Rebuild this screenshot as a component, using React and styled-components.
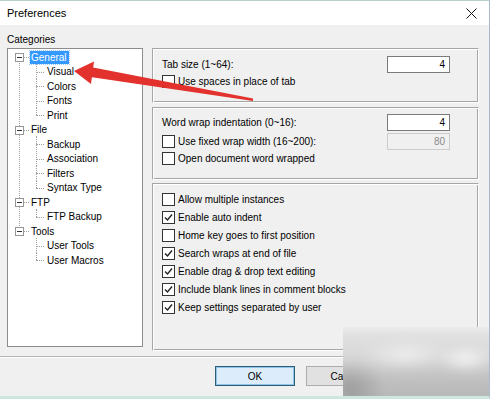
import React from "react";
import styled, { createGlobalStyle } from "styled-components";

const GlobalStyle = createGlobalStyle`
  html, body {
    margin: 0;
    padding: 0;
    background: #ffffff;
  }
  body {
    font-family: "Liberation Sans", Arial, sans-serif;
    font-size: 10px;
    color: #000;
  }
`;

const Window = styled.div`
  position: relative;
  width: 490px;
  height: 399px;
  box-sizing: border-box;
  background: #f0f0f0;
  border-top: 1px solid #b7cfc8;
  border-right: 1px solid #a9bccf;
  border-bottom: 3px solid #cde6e0;
  display: flex;
  flex-direction: column;
  overflow: hidden;
`;

const TitleBar = styled.div`
  height: 24px;
  flex: none;
  background: #ffffff;
  display: flex;
  align-items: center;
  justify-content: space-between;
  padding: 0 12px 0 7px;
  font-size: 11px;
`;

const Close = styled.div`
  width: 12px;
  height: 12px;
  display: flex;
  align-items: center;
  justify-content: center;
`;

const Main = styled.div`
  display: grid;
  grid-template-columns: 136px 1fr;
  grid-template-rows: 19px auto;
  column-gap: 9px;
  padding: 4px 10px 0 7px;
`;

const Label = styled.div`
  grid-column: 1 / 3;
  align-self: center;
  padding-top: 1px;
`;

const Tree = styled.div`
  position: relative;
  height: 299px;
  box-sizing: border-box;
  background: #ffffff;
  border: 1px solid #8c8c8c;
  padding-top: 1px;

  &::before {
    content: "";
    position: absolute;
    left: 11px;
    top: 9px;
    height: 174px;
    border-left: 1px dotted #a0a0a0;
  }
`;

const Row = styled.div`
  position: relative;
  height: 14.5px;
  display: flex;
  align-items: center;
  padding-left: ${(p) => (p.$child ? "38px" : "22px")};
  white-space: nowrap;

  &::before {
    content: "";
    position: absolute;
    top: 50%;
    left: ${(p) => (p.$child ? "28px" : "14px")};
    width: ${(p) => (p.$child ? "8px" : "7px")};
    border-top: 1px dotted #a0a0a0;
  }

  &::after {
    content: "";
    display: ${(p) => (p.$child ? "block" : "none")};
    position: absolute;
    left: 28px;
    top: -1px;
    height: ${(p) => (p.$last ? "8px" : "15.5px")};
    border-left: 1px dotted #a0a0a0;
  }
`;

const Expander = styled.span`
  position: absolute;
  left: 7px;
  top: 50%;
  margin-top: -4px;
  width: 7px;
  height: 7px;
  background: #fff;
  border: 1px solid #969696;
  z-index: 1;

  &::after {
    content: "";
    position: absolute;
    left: 1px;
    top: 3px;
    width: 5px;
    border-top: 1px solid #333;
  }
`;

const NodeText = styled.span`
  padding: 1px 2px 1px 1px;
  background: ${(p) => (p.$selected ? "#3399ff" : "transparent")};
  color: ${(p) => (p.$selected ? "#fff" : "#000")};
  outline: ${(p) => (p.$selected ? "1px dotted #9cc9ff" : "none")};
`;

const Groups = styled.div`
  display: flex;
  flex-direction: column;
`;

const Group = styled.div`
  box-sizing: border-box;
  height: ${(p) => p.$h}px;
  margin-bottom: ${(p) => p.$gap || 0}px;
  padding: ${(p) => p.$pt}px 28px 0 9px;
  border: 1px solid #a6a6a6;
  border-right-color: #ffffff;
  border-bottom-color: #ffffff;
  box-shadow: inset 1px 1px 0 #ffffff, inset -1px -1px 0 #a6a6a6;
`;

const FieldRow = styled.div`
  height: ${(p) => p.$h || 18}px;
  display: flex;
  align-items: center;
  justify-content: space-between;
  white-space: nowrap;
`;

const Check = styled.label`
  display: flex;
  align-items: center;
  gap: 3px;
`;

const Box = styled.span`
  width: 11px;
  height: 11px;
  flex: none;
  background: #fff;
  border: 1px solid #333;
  display: flex;
  align-items: center;
  justify-content: center;
`;

const NumberBox = styled.div`
  width: 63px;
  height: 17px;
  box-sizing: border-box;
  border: 1px solid ${(p) => (p.$disabled ? "#cccccc" : "#7a7a7a")};
  background: ${(p) => (p.$disabled ? "#f0f0f0" : "#ffffff")};
  color: ${(p) => (p.$disabled ? "#8a8a8a" : "#000")};
  display: flex;
  align-items: center;
  justify-content: flex-end;
  padding-right: 4px;
`;

const Separator = styled.div`
  margin: 5px 0 0;
  height: 1px;
  background: #b4b4b4;
  border-bottom: 1px solid #ffffff;
`;

const Footer = styled.div`
  display: flex;
  justify-content: flex-end;
  gap: 11px;
  padding: 8px 103px 0 0;
`;

const Button = styled.button`
  width: 80px;
  height: 20px;
  box-sizing: border-box;
  font: inherit;
  font-size: 10px;
  color: #000;
  border: 1px solid ${(p) => (p.$default ? "#2a5f78" : "#adadad")};
  background: ${(p) => (p.$default ? "#dcecfb" : "#e1e1e1")};
  box-shadow: ${(p) => (p.$default ? "inset 0 0 0 1px #8fc4e8" : "none")};
  padding: 0;
`;

const Watermark = styled.div`
  position: absolute;
  left: 343px;
  top: 326px;
  width: 149px;
  height: 73px;
  overflow: hidden;
  background: #d6d6d6;
`;

const Smudge = styled.div`
  position: absolute;
  inset: -8px;
  filter: blur(4px);
  background:
    linear-gradient(180deg, rgba(250,250,250,0.95) 0%, rgba(250,250,250,0) 16%),
    radial-gradient(ellipse 34px 28px at 16px 70px, #9c9c9c 0%, rgba(156,156,156,0) 100%),
    radial-gradient(ellipse 44px 16px at 70px 36px, #ededed 0%, rgba(237,237,237,0) 100%),
    radial-gradient(ellipse 30px 14px at 130px 40px, #f3f3f3 0%, rgba(243,243,243,0) 100%),
    linear-gradient(180deg, #e6e6e6 0%, #d9d9d9 40%, #c0c0c0 68%, #b3b3b3 100%);
`;

const Overlay = styled.svg`
  position: absolute;
  left: 0;
  top: 0;
  pointer-events: none;
`;

const tree = [
  { label: "General", selected: true, children: ["Visual", "Colors", "Fonts", "Print"] },
  { label: "File", children: ["Backup", "Association", "Filters", "Syntax Type"] },
  { label: "FTP", children: ["FTP Backup"] },
  { label: "Tools", children: ["User Tools", "User Macros"] },
];

const options = [
  ["Allow multiple instances", false],
  ["Enable auto indent", true],
  ["Home key goes to first position", false],
  ["Search wraps at end of file", true],
  ["Enable drag & drop text editing", true],
  ["Include blank lines in comment blocks", true],
  ["Keep settings separated by user", true],
];

const CheckBox = ({ checked, children }) => (
  <Check>
    <Box>
      {checked && (
        <svg width="9" height="9" viewBox="0 0 9 9">
          <path d="M1 4.5 L3.5 7 L8 1.5" fill="none" stroke="#222" strokeWidth="1.4" />
        </svg>
      )}
    </Box>
    <span>{children}</span>
  </Check>
);

export default function App() {
  return (
    <>
      <GlobalStyle />
      <Window>
        <TitleBar>
          <span>Preferences</span>
          <Close>
            <svg width="11" height="11" viewBox="0 0 11 11">
              <path d="M0.5 0.5 L10.5 10.5 M10.5 0.5 L0.5 10.5" stroke="#111" strokeWidth="1" />
            </svg>
          </Close>
        </TitleBar>

        <Main>
          <Label>Categories</Label>
          <Tree>
            {tree.map((node) => (
              <React.Fragment key={node.label}>
                <Row>
                  <Expander />
                  <NodeText $selected={node.selected}>{node.label}</NodeText>
                </Row>
                {node.children.map((c, i) => (
                  <Row key={c} $child $last={i === node.children.length - 1}>
                    <NodeText>{c}</NodeText>
                  </Row>
                ))}
              </React.Fragment>
            ))}
          </Tree>

          <Groups>
            <Group $h={55} $gap={4} $pt={6}>
              <FieldRow>
                <span>Tab size (1~64):</span>
                <NumberBox>4</NumberBox>
              </FieldRow>
              <FieldRow $h={16}>
                <CheckBox>Use spaces in place of tab</CheckBox>
              </FieldRow>
            </Group>

            <Group $h={73} $gap={3} $pt={4}>
              <FieldRow $h={20}>
                <span>Word wrap indentation (0~16):</span>
                <NumberBox>4</NumberBox>
              </FieldRow>
              <FieldRow $h={18}>
                <CheckBox>Use fixed wrap width (16~200):</CheckBox>
                <NumberBox $disabled>80</NumberBox>
              </FieldRow>
              <FieldRow $h={16}>
                <CheckBox>Open document word wrapped</CheckBox>
              </FieldRow>
            </Group>

            <Group $h={168} $pt={6}>
              {options.map(([text, on]) => (
                <FieldRow key={text}>
                  <CheckBox checked={on}>{text}</CheckBox>
                </FieldRow>
              ))}
            </Group>
          </Groups>
        </Main>

        <Separator />
        <Footer>
          <Button $default>OK</Button>
          <Button>Cancel</Button>
        </Footer>

        <Watermark>
          <Smudge />
        </Watermark>

        <Overlay width="492" height="399" viewBox="0 0 492 399">
          <polygon points="88,65.5 87,75.5 253,100 253,97.5" fill="#e3322d" />
          <polygon points="74,70 94,60.5 91,83" fill="#e3322d" />
        </Overlay>
      </Window>
    </>
  );
}
